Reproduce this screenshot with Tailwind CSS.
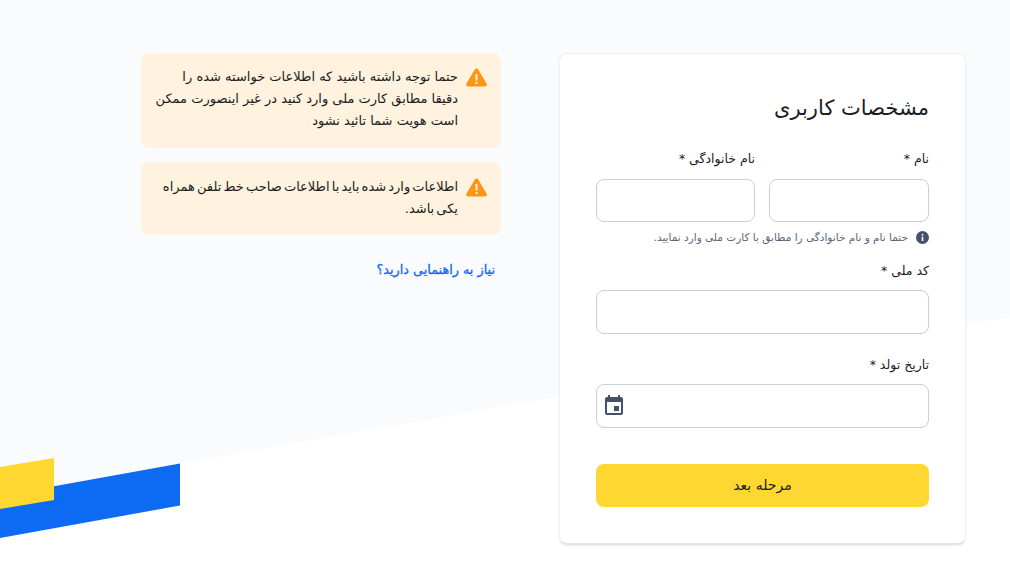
<!DOCTYPE html>
<html lang="fa" dir="rtl">
<head>
    <meta charset="UTF-8">
    <meta name="viewport" content="width=device-width, initial-scale=1.0">
    <title>مشخصات کاربری</title>
    <script src="https://cdn.jsdelivr.net/npm/@tailwindcss/browser@4"></script>
</head>
<body class="bg-white font-['DejaVu_Sans',sans-serif] text-[#1a1d24]">
    <div class="relative w-[1010px] h-[578px] overflow-hidden">
        <!-- Background shapes -->
        <svg class="absolute inset-0" width="1010" height="578" viewBox="0 0 1010 578">
            <polygon points="0,0 1010,0 1010,317 0,495" fill="#fafbfd"/>
            <polygon points="0,496 180,463.5 180,505.5 0,538" fill="#0d6af2"/>
            <polygon points="0,467 54,458 54,500 0,509" fill="#ffd731"/>
        </svg>

        <div class="relative flex gap-[58px] pt-[53px] pr-[44px]">
            <!-- Form card -->
            <form class="w-[407px] h-[492px] bg-white rounded-lg border border-[#f0f1f4] border-b-2 border-b-[#e2e4e8] shadow-[0_1px_2px_rgba(0,0,0,0.08)] px-9 pt-[38px]">
                <h2 class="text-[21px] leading-8 font-normal">مشخصات کاربری</h2>
                <div class="flex gap-[14px] mt-[25px]">
                    <div class="w-[160px]">
                        <label class="block text-[12.5px] leading-5">نام *</label>
                        <input type="text" class="block w-full h-[43px] mt-[10px] bg-white border border-[#c9ced9] rounded-lg">
                    </div>
                    <div class="flex-1">
                        <label class="block text-[12.5px] leading-5">نام خانوادگی *</label>
                        <input type="text" class="block w-full h-[43px] mt-[10px] bg-white border border-[#c9ced9] rounded-lg">
                    </div>
                </div>
                <div class="flex items-center gap-[8px] mt-[7px] text-[10.5px] leading-4 text-[#5b6478]">
                    <svg width="13" height="13" viewBox="0 0 24 24"><circle cx="12" cy="12" r="12" fill="#44506e"/><rect x="10.5" y="10.5" width="3" height="8" fill="#fff"/><rect x="10.5" y="5.5" width="3" height="3" fill="#fff"/></svg>
                    <span>حتما نام و نام خانوادگی را مطابق با کارت ملی وارد نمایید.</span>
                </div>
                <label class="block text-[12.5px] leading-5 mt-[16px]">کد ملی *</label>
                <input type="text" class="block w-full h-[44px] mt-[9px] bg-white border border-[#c9ced9] rounded-lg">
                <label class="block text-[12.5px] leading-5 mt-[21px]">تاریخ تولد *</label>
                <div class="relative mt-[9px]">
                    <input type="text" class="block w-full h-[44px] bg-white border border-[#c9ced9] rounded-lg">
                    <svg class="absolute left-[6px] top-[10px]" width="24" height="24" viewBox="0 0 24 24" fill="#44506e">
                        <path d="M19 3h-1V1h-2v2H8V1H6v2H5c-1.1 0-2 .9-2 2v14c0 1.1.9 2 2 2h14c1.1 0 2-.9 2-2V5c0-1.1-.9-2-2-2zm0 16H5V8h14v11z"/>
                        <rect x="12" y="12" width="5" height="5"/>
                    </svg>
                </div>
                <button type="button" class="block w-full h-[43px] mt-[36px] bg-[#ffd731] rounded-lg text-[14px] text-[#1a1d24]">مرحله بعد</button>
            </form>

            <!-- Notes column -->
            <div class="w-[360px]">
                <div class="flex gap-[8px] bg-[#fff2df] rounded-lg pt-[13px] pr-[14px] pl-3 h-[95px]">
                    <svg class="shrink-0 mt-[2px]" width="21" height="19" viewBox="0 0 21 19"><path d="M10.5 2.5 L18.8 16.5 H2.2 Z" fill="#ff9416" stroke="#ff9416" stroke-width="4" stroke-linejoin="round"/><rect x="9.5" y="6" width="2" height="6.5" fill="#fff2df"/><rect x="9.5" y="14" width="2" height="2" fill="#fff2df"/></svg>
                    <p class="text-[13px] leading-[22px]">حتما توجه داشته باشید که اطلاعات خواسته شده را دقیقا مطابق کارت ملی وارد کنید در غیر اینصورت ممکن است هویت شما تائید نشود</p>
                </div>
                <div class="flex gap-[8px] bg-[#fff2df] rounded-lg pt-[14px] pr-[14px] pl-3 h-[73px] mt-[14px]">
                    <svg class="shrink-0 mt-[2px]" width="21" height="19" viewBox="0 0 21 19"><path d="M10.5 2.5 L18.8 16.5 H2.2 Z" fill="#ff9416" stroke="#ff9416" stroke-width="4" stroke-linejoin="round"/><rect x="9.5" y="6" width="2" height="6.5" fill="#fff2df"/><rect x="9.5" y="14" width="2" height="2" fill="#fff2df"/></svg>
                    <p class="text-[13px] leading-[22px] [word-spacing:-2px]">اطلاعات وارد شده باید با اطلاعات صاحب خط تلفن همراه یکی باشد.</p>
                </div>
                <a href="#" class="block mt-[25px] mr-[6px] text-[12.8px] leading-5 [-webkit-text-stroke:0.3px_#0d6af2] text-[#0d6af2]">نیاز به راهنمایی دارید؟</a>
            </div>
        </div>
    </div>
</body>
</html>
